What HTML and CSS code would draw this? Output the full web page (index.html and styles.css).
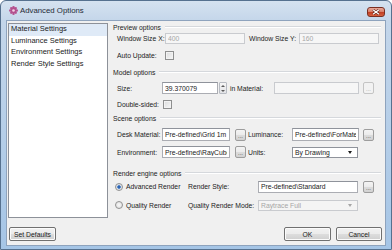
FILE: index.html
```html
<!DOCTYPE html>
<html lang="en">
<head>
    <meta charset="UTF-8">
    <title>Advanced Options</title>
    <link rel="stylesheet" href="styles.css">
</head>
<body>
    <div class="window">
        <div class="titlebar">
            <svg class="app-icon" width="9" height="9" viewBox="0 0 18 18">
                <g fill="#b4508e">
                    <circle cx="9" cy="2.5" r="2.5"/>
                    <circle cx="9" cy="15.5" r="2.5"/>
                    <circle cx="2.5" cy="9" r="2.5"/>
                    <circle cx="15.5" cy="9" r="2.5"/>
                    <circle cx="4.4" cy="4.4" r="2.3"/>
                    <circle cx="13.6" cy="4.4" r="2.3"/>
                    <circle cx="4.4" cy="13.6" r="2.3"/>
                    <circle cx="13.6" cy="13.6" r="2.3"/>
                    <circle cx="9" cy="9" r="5.5"/>
                </g>
                <circle cx="9" cy="9" r="2.6" fill="#f3d3e6"/>
            </svg>
            <span class="title">Advanced Options</span>
            <div class="close">
                <svg width="8" height="6" viewBox="0 0 8 6">
                    <path d="M1 0.8 L7 5.2 M7 0.8 L1 5.2" stroke="#5a1d12" stroke-width="2.4"/>
                    <path d="M1 0.8 L7 5.2 M7 0.8 L1 5.2" stroke="#ffffff" stroke-width="1.3"/>
                </svg>
            </div>
        </div>

        <div class="client">
            <div class="main">
                <ul class="nav">
                    <li class="selected">Material Settings</li>
                    <li>Luminance Settings</li>
                    <li>Environment Settings</li>
                    <li>Render Style Settings</li>
                </ul>

                <div class="panel">
                    <div class="group-title">Preview options</div>
                    <div class="row row-ws">
                        <span class="label w48">Window Size X:</span>
                        <input class="field disabled w80 h11" value="400" disabled>
                        <span class="label w50 ml4">Window Size Y:</span>
                        <input class="field disabled w80 h11" value="160" disabled>
                    </div>
                    <div class="row row-auto">
                        <span class="label w48">Auto Update:</span>
                        <span class="check"></span>
                    </div>

                    <div class="group-title gt-model">Model options</div>
                    <div class="row row-size">
                        <span class="label w45">Size:</span>
                        <input class="field w56" value="39.370079">
                        <span class="spin"><i class="up"></i><i class="down"></i></span>
                        <span class="label w7 ml3">in</span>
                        <span class="label w37">Material:</span>
                        <input class="field disabled w85" value="" disabled>
                        <span class="dots ml4 off">...</span>
                    </div>
                    <div class="row row-double">
                        <span class="label w46">Double-sided:</span>
                        <span class="check"></span>
                    </div>

                    <div class="group-title gt-scene">Scene options</div>
                    <div class="row row-desk">
                        <span class="label w45">Desk Material:</span>
                        <input class="field w68 h13" value="Pre-defined\Grid 1m">
                        <span class="dots ml5">...</span>
                        <span class="label w44 ml2">Luminance:</span>
                        <input class="field w67 h13" value="Pre-defined\ForMaterial">
                        <span class="dots ml4">...</span>
                    </div>
                    <div class="row row-env">
                        <span class="label w45">Environment:</span>
                        <input class="field w68" value="Pre-defined\RayCube">
                        <span class="dots ml5">...</span>
                        <span class="label w44 ml2">Units:</span>
                        <span class="select w66">By Drawing<i class="arrow"></i></span>
                    </div>

                    <div class="group-title gt-render">Render engine options</div>
                    <div class="row row-adv">
                        <span class="radio on"></span>
                        <span class="label w62 ml3">Advanced Render</span>
                        <span class="label w70">Render Style:</span>
                        <input class="field w100" value="Pre-defined\Standard">
                        <span class="dots ml5">...</span>
                    </div>
                    <div class="row row-quality">
                        <span class="radio"></span>
                        <span class="label w62 ml3">Quality Render</span>
                        <span class="label w70">Quality Render Mode:</span>
                        <span class="select disabled w100">Raytrace Full<i class="arrow"></i></span>
                    </div>
                </div>
            </div>

            <div class="footer">
                <button class="btn btn-defaults">Set Defaults</button>
                <div class="actions">
                    <button class="btn btn-ok">OK</button>
                    <button class="btn btn-cancel">Cancel</button>
                </div>
            </div>
        </div>
    </div>
</body>
</html>
```

FILE: styles.css
```css
body {
    margin: 0;
    background: #ffffff;
}
.window {
    width: 392px;
    height: 250px;
    box-sizing: border-box;
    border: 1px solid #56718f;
    border-radius: 6px 6px 0 0;
    background: linear-gradient(to bottom, #d5e2f0 0, #c4d6ea 20px, #b3cde8 60%, #a5c5e6 100%);
    display: flex;
    flex-direction: column;
    font-family: "Liberation Sans", Arial, sans-serif;
    font-size: 6.8px;
    color: #1b1b1b;
    overflow: hidden;
}

/* title bar */
.titlebar {
    height: 19px;
    display: flex;
    align-items: center;
    padding-left: 8px;
}
.app-icon {
    margin-right: 2px;
}
.title {
    font-size: 7.8px;
    color: #1e2a36;
}
.close {
    margin-left: auto;
    margin-right: 6px;
    align-self: flex-start;
    margin-top: 6px;
    width: 18px;
    height: 10px;
    box-sizing: border-box;
    border: 1px solid #7a2f22;
    border-radius: 3px;
    background: linear-gradient(to bottom, #e9a99a 0, #d8816c 45%, #c23f24 55%, #d5603f 100%);
    display: flex;
    align-items: center;
    justify-content: center;
}

/* client area */
.client {
    flex: 1;
    margin: 0 5px 3px 5px;
    border: 1px solid #8ea3bd;
    background: #f0f0f0;
    display: flex;
    flex-direction: column;
}
.main {
    display: flex;
}
.nav {
    list-style: none;
    margin: 2px 0 0 1px;
    padding: 0;
    width: 100px;
    height: 195px;
    box-sizing: border-box;
    border: 1px solid #8d9199;
    background: #ffffff;
    font-size: 7.5px;
}
.nav li {
    height: 11.5px;
    line-height: 10px;
    padding-left: 2px;
    white-space: nowrap;
}
.nav li.selected {
    background: #dfeaf7;
}
.panel {
    margin: 1px 0 0 5px;
    width: 268px;
}

/* groups and rows */
.group-title {
    display: flex;
    align-items: center;
    height: 10px;
    white-space: nowrap;
}
.group-title::after {
    content: "";
    flex: 1;
    margin-left: 4px;
    border-top: 1px solid #d5d8dc;
    border-bottom: 1px solid #ffffff;
}
.gt-model { margin-top: 7px; }
.gt-scene { margin-top: 4px; }
.gt-render { margin-top: 10px; }

.row {
    display: flex;
    align-items: center;
    padding-left: 4px;
}
.row-ws { margin-top: 1px; height: 11px; }
.row-auto { margin-top: 6px; height: 10px; }
.row-size { margin-top: 5px; height: 12px; }
.row-double { margin-top: 5px; height: 10px; }
.row-desk { margin-top: 5px; height: 13px; }
.row-env { margin-top: 5px; height: 12px; }
.row-adv { margin-top: 2px; height: 13px; padding-left: 2px; }
.row-quality { margin-top: 6px; height: 12px; padding-left: 2px; }

.label {
    white-space: nowrap;
    flex: none;
    overflow: visible;
}
.w7 { width: 7px; }
.w37 { width: 37px; }
.w44 { width: 44px; }
.w45 { width: 45px; }
.w46 { width: 46px; }
.w48 { width: 48px; }
.w50 { width: 50px; }
.w56 { width: 56px; }
.w62 { width: 62px; }
.w66 { width: 66px; }
.w67 { width: 67px; }
.w68 { width: 68px; }
.w70 { width: 70px; }
.w80 { width: 80px; }
.w85 { width: 85px; }
.w100 { width: 100px; }
.ml2 { margin-left: 2px; }
.ml3 { margin-left: 3px; }
.ml4 { margin-left: 4px; }
.ml5 { margin-left: 5px; }

/* controls */
.field {
    flex: none;
    box-sizing: border-box;
    height: 12px;
    margin: 0;
    padding: 0 2px;
    border: 1px solid #abadb3;
    border-top-color: #8f939b;
    background: #ffffff;
    font: inherit;
    color: #1b1b1b;
    outline: none;
}
.h11 { height: 11px; }
.h13 { height: 13px; }
.field.disabled {
    background: #f6f6f6;
    border-color: #c9cbcf;
    color: #a6a6a6;
}
.spin {
    flex: none;
    margin-left: 1px;
    width: 8px;
    height: 12px;
    box-sizing: border-box;
    border: 1px solid #b8bcc3;
    border-radius: 1px;
    background: linear-gradient(to bottom, #f6f6f6, #e2e3e6);
    display: flex;
    flex-direction: column;
    align-items: center;
    justify-content: space-around;
}
.spin i {
    display: block;
    width: 0;
    height: 0;
    border-left: 2px solid transparent;
    border-right: 2px solid transparent;
}
.spin .up { border-bottom: 2px solid #5b5b5b; }
.spin .down { border-top: 2px solid #5b5b5b; }

.dots {
    flex: none;
    width: 11px;
    height: 12px;
    box-sizing: border-box;
    border: 1px solid #9d9d9d;
    border-radius: 2px;
    background: linear-gradient(to bottom, #f4f4f4 0, #ebebeb 50%, #dcdcdc 51%, #d2d2d2 100%);
    font-size: 6px;
    line-height: 12px;
    text-align: center;
    color: #333333;
}
.dots.off {
    border-color: #c4c4c4;
    background: #f2f2f2;
    color: #a0a0a0;
}
.select {
    flex: none;
    position: relative;
    box-sizing: border-box;
    height: 11px;
    line-height: 9px;
    padding-left: 2px;
    border: 1px solid #8f939b;
    background: #ffffff;
    white-space: nowrap;
}
.select.disabled {
    border-color: #c9cbcf;
    background: #f4f4f4;
    color: #a6a6a6;
}
.select .arrow {
    position: absolute;
    right: 5px;
    top: 3px;
    width: 0;
    height: 0;
    border-left: 2.5px solid transparent;
    border-right: 2.5px solid transparent;
    border-top: 3px solid #1b1b1b;
}
.select.disabled .arrow {
    border-top-color: #a6a6a6;
}
.check {
    flex: none;
    width: 9px;
    height: 9px;
    box-sizing: border-box;
    border: 1px solid #8e8f8f;
    background: linear-gradient(135deg, #dadbdc, #f7f7f7);
    box-shadow: inset 0 0 0 1px #f2f2f2;
}
.radio {
    flex: none;
    width: 8px;
    height: 8px;
    box-sizing: border-box;
    border: 1px solid #929292;
    border-radius: 50%;
    background: radial-gradient(circle, #f8f8f8 0, #dcdcdc 100%);
}
.radio.on {
    background: radial-gradient(circle, #1d4f9e 0, #3b76c4 35%, #d7dde5 45%, #eeeeee 100%);
}

/* footer */
.footer {
    margin-top: auto;
    display: flex;
    justify-content: space-between;
    padding: 0 3px 4px 2px;
}
.actions {
    display: flex;
    gap: 5px;
}
.btn {
    height: 14px;
    box-sizing: border-box;
    margin: 0;
    padding: 0;
    border: 1px solid #707070;
    border-radius: 2px;
    background: linear-gradient(to bottom, #f2f2f2 0, #ebebeb 50%, #dddddd 51%, #cfcfcf 100%);
    font: inherit;
    color: #1b1b1b;
    box-shadow: inset 0 0 0 1px #fbfbfb;
}
.btn-defaults { width: 47px; }
.btn-ok { width: 47px; }
.btn-cancel { width: 46px; }
```
